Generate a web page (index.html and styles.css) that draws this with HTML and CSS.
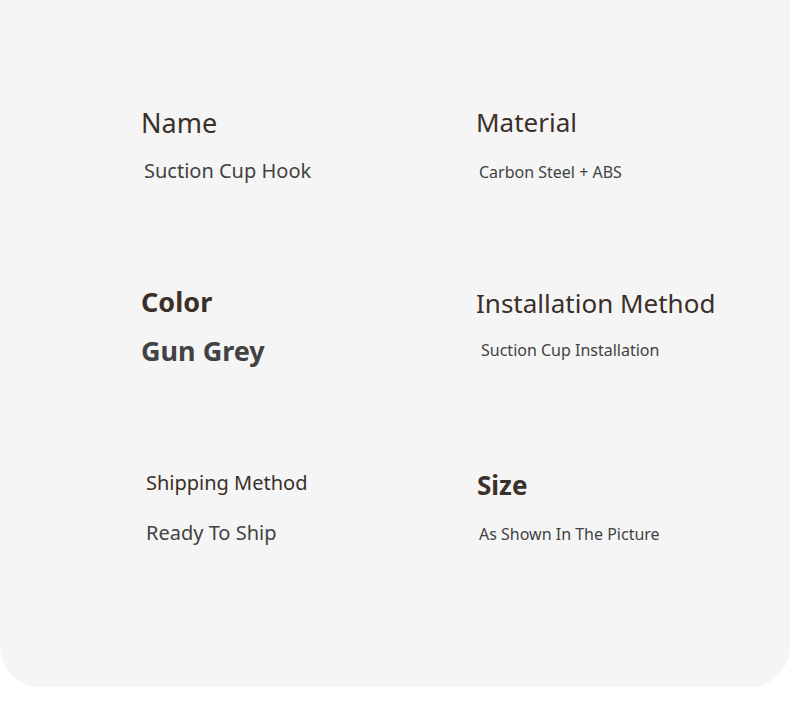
FILE: index.html
```html
<!DOCTYPE html>
<html>
<head>
<meta charset="utf-8">
<link rel="stylesheet" href="styles.css">
</head>
<body>
<div class="card">
  <div class="specs">
    <div class="cell">
      <div class="label l-reg l-name">Name</div>
      <div class="value v-md v-name">Suction Cup Hook</div>
    </div>
    <div class="cell">
      <div class="label l-reg">Material</div>
      <div class="value v-sm v-mat">Carbon Steel + ABS</div>
    </div>
    <div class="cell">
      <div class="label l-bold l-color">Color</div>
      <div class="value v-bold">Gun Grey</div>
    </div>
    <div class="cell c-install">
      <div class="label l-reg">Installation Method</div>
      <div class="value v-sm v-inst">Suction Cup Installation</div>
    </div>
    <div class="cell c-ship">
      <div class="label l-md">Shipping Method</div>
      <div class="value v-md v-ship">Ready To Ship</div>
    </div>
    <div class="cell">
      <div class="label l-bold l-size">Size</div>
      <div class="value v-sm v-size">As Shown In The Picture</div>
    </div>
  </div>
</div>
</body>
</html>
```
FILE: styles.css
```css
html, body {
  margin: 0;
  padding: 0;
  background: #ffffff;
}
body {
  font-family: "Noto Sans", "Open Sans", sans-serif;
  width: 790px;
  height: 722px;
  overflow: hidden;
}
.card {
  width: 790px;
  height: 687px;
  background: #f5f5f5;
  border-radius: 0 0 40px 40px;
  box-sizing: border-box;
  padding: 105px 0 0 141px;
}
.specs {
  display: grid;
  grid-template-columns: 335px 314px;
  grid-template-rows: 179px 183px auto;
}
.cell {
  display: flex;
  flex-direction: column;
}
.label {
  color: #3b2f29;
  white-space: nowrap;
}
.l-reg {
  font-size: 26px;
  line-height: 36px;
  margin-top: -1px;
}
.l-name {
  font-size: 27px;
  margin-top: 0;
}
.l-bold {
  font-size: 26px;
  line-height: 36px;
  font-weight: 700;
}
.l-color {
  font-size: 27px;
}
.l-md {
  font-size: 20px;
  line-height: 28px;
  padding-left: 5px;
  margin-top: 2px;
}
.value {
  color: #424242;
  white-space: nowrap;
}
.v-md {
  font-size: 20px;
  line-height: 26px;
}
.v-sm {
  font-size: 16px;
  line-height: 22px;
}
.v-bold {
  font-size: 27px;
  line-height: 36px;
  font-weight: 700;
  margin-top: 13px;
}
.v-name {
  margin-top: 17px;
  padding-left: 3px;
}
.v-mat {
  margin-top: 21px;
  padding-left: 3px;
}
.c-install {
  margin-top: 2px;
}
.v-inst {
  margin-top: 18px;
  padding-left: 5px;
}
.v-ship {
  line-height: 28px;
  margin-top: 22px;
  padding-left: 5px;
}
.l-size {
  padding-left: 1px;
}
.v-size {
  margin-top: 20px;
  padding-left: 3px;
}
```
